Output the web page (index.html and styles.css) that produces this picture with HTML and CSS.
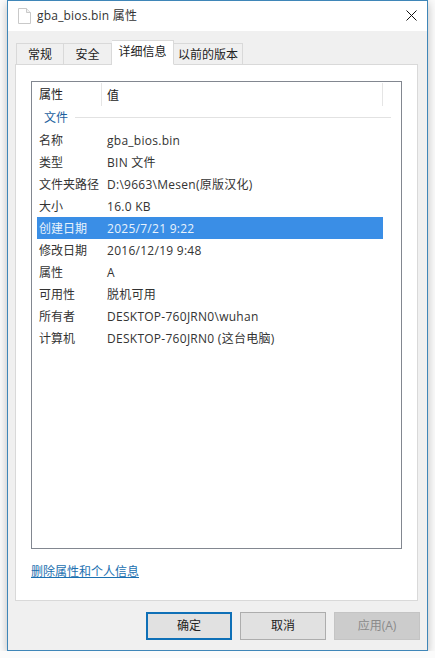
FILE: index.html
```html
<!DOCTYPE html>
<html lang="zh-CN">
  <head>
    <meta charset="UTF-8" />
    <title>gba_bios.bin 属性</title>
    <link rel="stylesheet" href="styles.css">
  </head>

  <body>
    <div class="dialog">
      <div class="title-bar">
        <svg class="file-icon" width="13" height="16" viewBox="0 0 13 16">
          <path d="M0.5 0.5H8.5L12.5 4.5V15.5H0.5Z" fill="#fff" stroke="#c9c9c9" />
          <path d="M8.5 0.5V4.5H12.5" fill="#f2f2f2" stroke="#c9c9c9" />
        </svg>
        <span class="title-text">gba_bios.bin 属性</span>
        <svg class="close-icon" width="11" height="11" viewBox="0 0 11 11">
          <path d="M0.5 0.5L10.5 10.5M10.5 0.5L0.5 10.5" fill="none" stroke="#111" stroke-width="1" />
        </svg>
      </div>

      <div class="dialog-body">
        <div class="tabs">
          <div class="tab tab-general">常规</div>
          <div class="tab tab-security">安全</div>
          <div class="tab tab-active">详细信息</div>
          <div class="tab tab-previous">以前的版本</div>
        </div>

        <div class="tab-panel">
          <div class="list-box">
            <div class="list-header">
              <div class="col-name">属性</div>
              <div class="col-value">值</div>
            </div>
            <div class="list-group">
              <span>文件</span>
              <i></i>
            </div>
            <div class="list-row"><div class="col-name">名称</div><div class="col-value">gba_bios.bin</div></div>
            <div class="list-row"><div class="col-name">类型</div><div class="col-value">BIN 文件</div></div>
            <div class="list-row"><div class="col-name">文件夹路径</div><div class="col-value">D:\9663\Mesen(原版汉化)</div></div>
            <div class="list-row"><div class="col-name">大小</div><div class="col-value">16.0 KB</div></div>
            <div class="list-row selected"><div class="col-name">创建日期</div><div class="col-value">2025/7/21 9:22</div></div>
            <div class="list-row"><div class="col-name">修改日期</div><div class="col-value">2016/12/19 9:48</div></div>
            <div class="list-row"><div class="col-name">属性</div><div class="col-value">A</div></div>
            <div class="list-row"><div class="col-name">可用性</div><div class="col-value">脱机可用</div></div>
            <div class="list-row"><div class="col-name">所有者</div><div class="col-value">DESKTOP-760JRN0\wuhan</div></div>
            <div class="list-row"><div class="col-name">计算机</div><div class="col-value">DESKTOP-760JRN0 (这台电脑)</div></div>
          </div>
          <a class="remove-link" href="javascript:void (0);">删除属性和个人信息</a>
        </div>

        <div class="buttons">
          <div class="btn btn-default">确定</div>
          <div class="btn">取消</div>
          <div class="btn btn-disabled">应用(A)</div>
        </div>
      </div>
    </div>
  </body>
</html>
```

FILE: styles.css
```css
* {
  margin: 0;
  padding: 0;
  box-sizing: border-box;
}
body {
  background-color: #fbfbfb;
  font-family: 'Open Sans', 'Noto Sans CJK SC', sans-serif;
  font-size: 12px;
  color: #222;
  overflow: hidden;
}
.dialog {
  width: 421px;
  height: 651px;
  margin-left: 7px;
  background-color: #f0f0f0;
  border: 1px solid #3f86b8;
  box-shadow: 0 3px 9px rgba(0, 0, 0, 0.25);
  display: flex;
  flex-direction: column;
}
.title-bar {
  height: 30px;
  flex: none;
  background-color: #fff;
  display: flex;
  align-items: center;
  padding: 0 10px 1px 10px;
}
.title-bar .file-icon {
  margin-right: 6px;
}
.title-bar .title-text {
  flex: 1;
  color: #333;
  letter-spacing: 0.2px;
  margin-bottom: 2px;
}
.dialog-body {
  flex: 1;
  padding: 9px 9px 0 7px;
  display: flex;
  flex-direction: column;
}
.tabs {
  height: 24px;
  flex: none;
  display: flex;
  align-items: flex-end;
  position: relative;
  z-index: 1;
  padding-left: 1px;
}
.tab {
  height: 21px;
  line-height: 21px;
  text-align: center;
  background-color: #f0f0f0;
  border: 1px solid #d9d9d9;
  border-bottom: 0;
  border-left: 0;
}
.tab-general {
  width: 48px;
  border-left: 1px solid #d9d9d9;
}
.tab-security {
  width: 48px;
}
.tab-active {
  width: 62px;
  height: 25px;
  line-height: 22px;
  background-color: #fff;
  border-bottom: 1px solid #fff;
  margin-bottom: -1px;
}
.tab-previous {
  width: 69px;
}
.tab-panel {
  height: 537px;
  flex: none;
  background-color: #fff;
  border: 1px solid #d9d9d9;
  padding: 16px 15px 0 15px;
}
.list-box {
  width: 371px;
  height: 468px;
  border: 1px solid #828790;
  padding: 1px 18px 0 5px;
}
.list-header {
  height: 23px;
  display: flex;
  align-items: center;
  border-right: 1px solid #e5e5e5;
}
.list-header .col-name {
  border-right: 1px solid #e5e5e5;
  height: 23px;
  line-height: 23px;
}
.list-group {
  height: 23px;
  display: flex;
  align-items: center;
  padding: 0 0 1px 7px;
  color: #1d5f9e;
  margin-right: -8px;
}
.list-group i {
  flex: 1;
  height: 1px;
  margin-left: 7px;
  background-color: #e2e2e2;
}
.list-row {
  height: 22px;
  display: flex;
  align-items: center;
  color: #333;
}
.col-name {
  width: 65px;
  padding-left: 2px;
  flex: none;
}
.col-value {
  padding-left: 5px;
  white-space: nowrap;
  letter-spacing: 0.27px;
}
.list-row.selected {
  background-color: #3a8ee6;
  color: #e8f2fc;
}
.remove-link {
  display: inline-block;
  margin-top: 14px;
  color: #1a6fb0;
  text-decoration: underline;
  line-height: 17px;
}
.buttons {
  display: flex;
  justify-content: flex-end;
  gap: 8px;
  padding-top: 11px;
  margin-right: -2px;
}
.btn {
  width: 86px;
  height: 28px;
  line-height: 26px;
  text-align: center;
  background-color: #e1e1e1;
  border: 1px solid #adadad;
  color: #222;
}
.btn-default {
  border: 2px solid #0f70b7;
  line-height: 24px;
}
.btn-disabled {
  background-color: #cccccc;
  border-color: #c4c4c4;
  color: #8a8a8a;
}
```
